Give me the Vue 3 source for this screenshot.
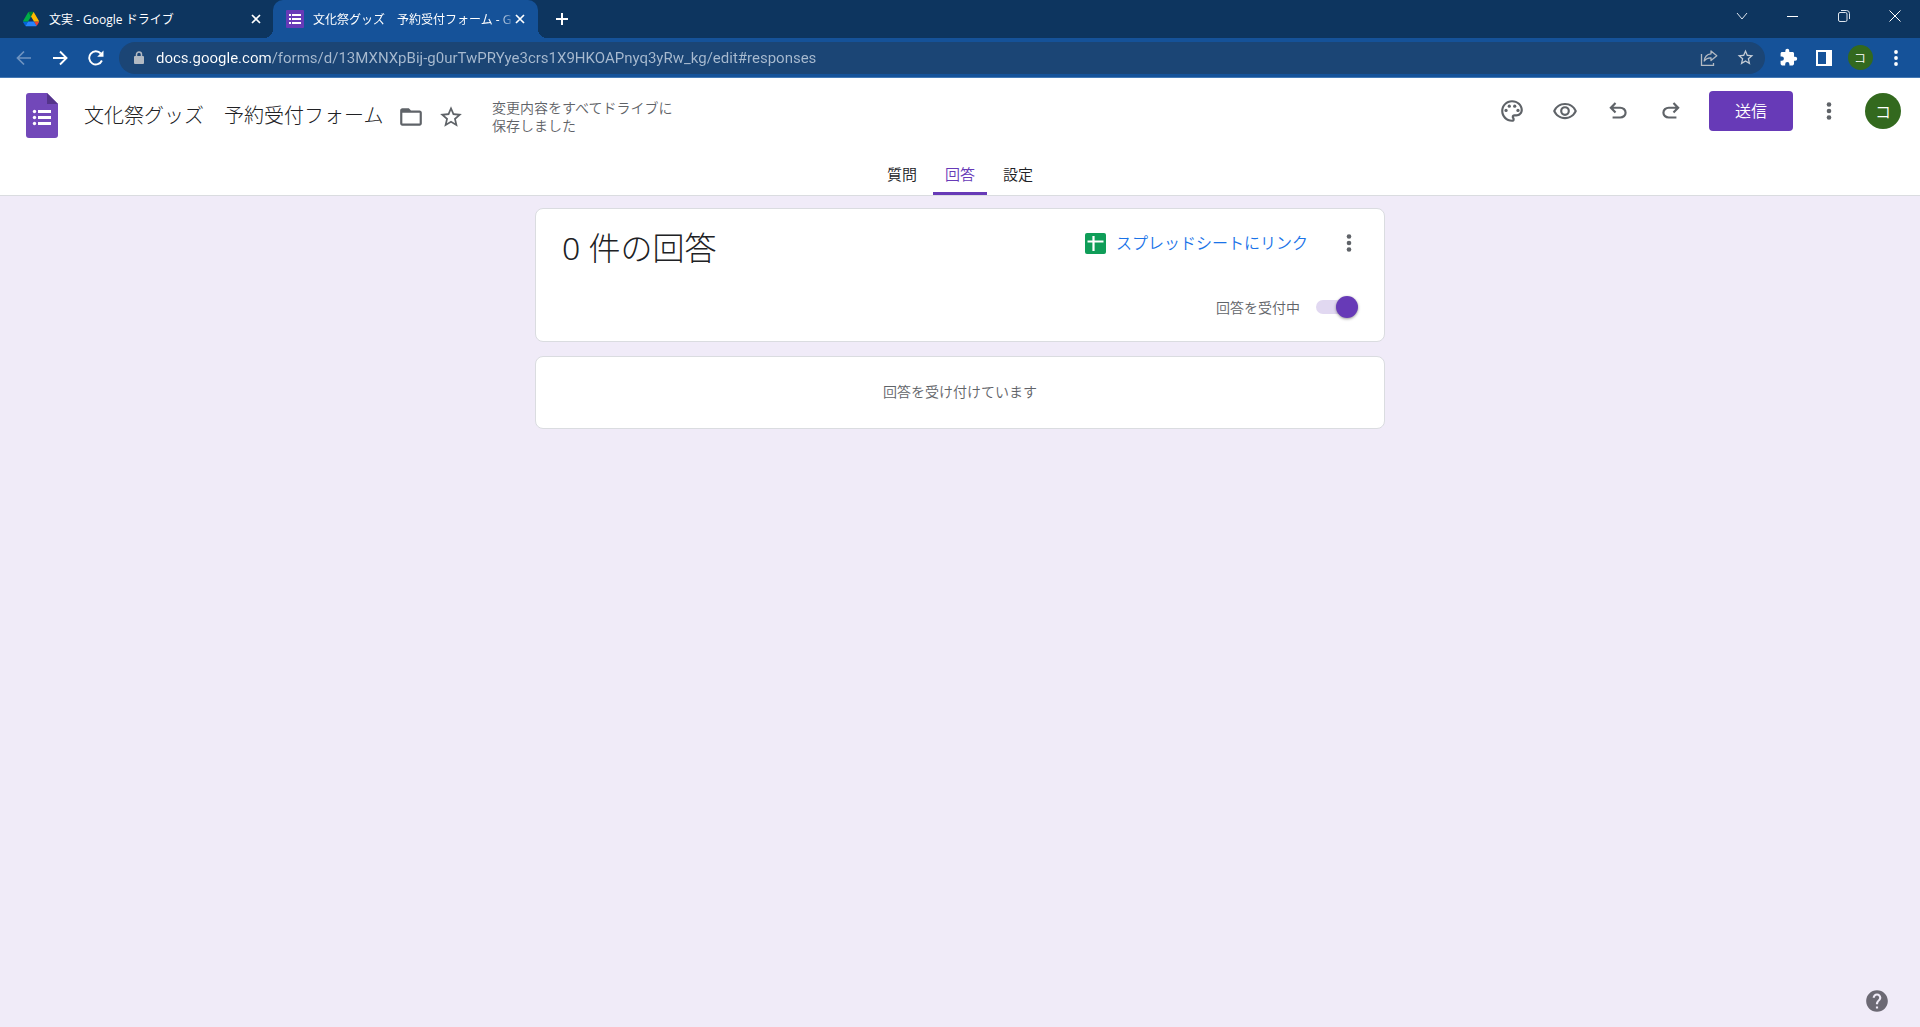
<script setup>
import { ref } from 'vue'

const url = ref('docs.google.com/forms/d/13MXNXpBij-g0urTwPRYye3crs1X9HKOAPnyq3yRw_kg/edit#responses')
const title = ref('文化祭グッズ　予約受付フォーム')
const accepting = ref(true)
const active = ref('回答')
const sections = ['質問', '回答', '設定']

const star = 'M22 9.24l-7.19-.62L12 2 9.19 8.63 2 9.24l5.46 4.73L5.82 21 12 17.27 18.18 21l-1.63-7.03L22 9.24zM12 15.4l-3.76 2.27 1-4.28-3.32-2.88 4.38-.38L12 6.1l1.71 4.04 4.38.38-3.32 2.88 1 4.28L12 15.4z'
</script>

<template>
  <div class="window">
    <div class="strip">
      <div class="tab">
        <svg width="16" height="16" viewBox="0 0 87 78">
          <path fill="#0066da" d="M6.6 66.85l3.85 6.65c.8 1.4 1.95 2.5 3.3 3.3L27.5 53H0c0 1.55.4 3.1 1.2 4.5z" />
          <path fill="#00ac47" d="M43.65 25L29.9 1.2c-1.35.8-2.5 1.9-3.3 3.3L1.2 48.5A9 9 0 0 0 0 53h27.5z" />
          <path fill="#ea4335" d="M73.55 76.8c1.35-.8 2.5-1.9 3.3-3.3l1.6-2.75L86.1 57.5c.8-1.4 1.2-2.95 1.2-4.5H59.8l5.85 11.5z" />
          <path fill="#00832d" d="M43.65 25L57.4 1.2C56.05.4 54.5 0 52.9 0H34.4c-1.6 0-3.15.45-4.5 1.2z" />
          <path fill="#2684fc" d="M59.8 53H27.5L13.75 76.8c1.35.8 2.9 1.2 4.5 1.2h50.8c1.6 0 3.15-.45 4.5-1.2z" />
          <path fill="#ffba00" d="M73.4 26.5L60.7 4.5c-.8-1.4-1.95-2.5-3.3-3.3L43.65 25 59.8 53h27.45c0-1.55-.4-3.1-1.2-4.5z" />
        </svg>
        <span class="tab-text">文実 - Google ドライブ</span>
        <button class="tab-close" aria-label="閉じる">
          <svg width="10" height="10" viewBox="0 0 10 10"><path d="M1 1l8 8M9 1l-8 8" stroke="#fff" stroke-width="1.7" /></svg>
        </button>
      </div>
      <div class="tab current">
        <svg width="18" height="18" viewBox="0 0 18 18">
          <rect width="18" height="18" rx="1" fill="#673ab7" />
          <path fill="#fff" d="M3 4h2v2H3zM6 4h9v2H6zM3 8h2v2H3zM6 8h9v2H6zM3 12h2v2H3zM6 12h9v2H6z" />
        </svg>
        <span class="tab-text">文化祭グッズ　予約受付フォーム - G</span>
        <button class="tab-close" aria-label="閉じる">
          <svg width="10" height="10" viewBox="0 0 10 10"><path d="M1 1l8 8M9 1l-8 8" stroke="#fff" stroke-width="1.7" /></svg>
        </button>
      </div>
      <button class="new-tab" aria-label="新しいタブ">
        <svg width="14" height="14" viewBox="0 0 14 14"><path d="M7 1v12M1 7h12" stroke="#fff" stroke-width="2" /></svg>
      </button>
      <div class="controls">
        <button aria-label="タブを検索"><svg width="12" height="8" viewBox="0 0 12 8"><path d="M1 1l5 6 5-6" fill="none" stroke="#dfe6ee" /></svg></button>
        <button aria-label="最小化"><svg width="12" height="12" viewBox="0 0 12 12"><path d="M0 6.5h11" stroke="#fff" /></svg></button>
        <button aria-label="元に戻す">
          <svg width="12" height="12" viewBox="0 0 12 12" fill="none" stroke="#dfe6ee">
            <rect x=".5" y="2.5" width="8.5" height="9" rx="1.5" /><path d="M3 .5h5.5a3 3 0 0 1 3 3V9" />
          </svg>
        </button>
        <button aria-label="閉じる"><svg width="12" height="12" viewBox="0 0 12 12"><path d="M.5.5l11 11M11.5.5l-11 11" stroke="#fff" /></svg></button>
      </div>
    </div>

    <div class="toolbar">
      <button aria-label="戻る"><svg width="16" height="16" viewBox="0 0 16 16" fill="none" stroke="#6f94c1" stroke-width="1.7"><path d="M15 8H2M8 1.5L1.5 8 8 14.5" /></svg></button>
      <button aria-label="進む"><svg width="16" height="16" viewBox="0 0 16 16" fill="none" stroke="#fff" stroke-width="1.9"><path d="M1 8h13M8 1.5L14.5 8 8 14.5" /></svg></button>
      <button aria-label="再読み込み">
        <svg width="16" height="16" viewBox="0 0 16 16"><path d="M13.9 10.5A6.6 6.6 0 1 1 12.8 3.5" fill="none" stroke="#fff" stroke-width="1.9" /><path d="M15.5.5v6.3H9.2z" fill="#fff" /></svg>
      </button>
      <div class="omnibox">
        <svg width="10" height="14" viewBox="0 0 10 14"><rect y="5" width="10" height="8" rx="1" fill="#b3bac3" /><path d="M2.5 6V3.5a2.5 2.5 0 0 1 5 0V6" fill="none" stroke="#b3bac3" stroke-width="1.5" /></svg>
        <input v-model="url" class="url" aria-label="アドレス" spellcheck="false">
        <button aria-label="共有">
          <svg width="18" height="18" viewBox="0 0 18 18" fill="none" stroke="#b3bac3" stroke-width="1.3">
            <path d="M1.5 5v11.3H13.5V14" /><path d="M11 2l5.8 4.8L11 11.5V8.8C8 8.6 5.8 9.7 4.2 12c.4-4 2.8-6.8 6.8-7.2z" stroke-linejoin="round" />
          </svg>
        </button>
        <button aria-label="ブックマーク"><svg width="19" height="19" viewBox="0 0 24 24" fill="#c4ccd6"><path :d="star" /></svg></button>
      </div>
      <button aria-label="拡張機能">
        <svg width="19" height="19" viewBox="0 0 24 24" fill="#fff"><path d="M20.5 11H19V7c0-1.1-.9-2-2-2h-4V3.5a2.5 2.5 0 0 0-5 0V5H4c-1.1 0-2 .9-2 2v3.8h1.5a2.7 2.7 0 0 1 0 5.4H2V20c0 1.1.9 2 2 2h3.8v-1.5a2.7 2.7 0 0 1 5.4 0V22H17c1.1 0 2-.9 2-2v-4h1.5a2.5 2.5 0 0 0 0-5z" /></svg>
      </button>
      <button aria-label="サイドパネル"><svg width="16" height="16" viewBox="0 0 16 16"><path fill="#fff" fill-rule="evenodd" d="M0 0h16v16H0zM2 2v12h8V2z" /></svg></button>
      <button aria-label="プロフィール"><span class="avatar small">コ</span></button>
      <button aria-label="メニュー"><svg width="4" height="16" viewBox="0 0 4 16" fill="#fff"><circle cx="2" cy="2" r="1.9" /><circle cx="2" cy="8" r="1.9" /><circle cx="2" cy="14" r="1.9" /></svg></button>
    </div>

    <header>
      <div class="top">
        <a class="logo" href="#" aria-label="フォーム ホーム">
          <svg width="32" height="45" viewBox="0 0 32 45">
            <path fill="#7248b9" d="M3 0h18l11 11v31a3 3 0 0 1-3 3H3a3 3 0 0 1-3-3V3a3 3 0 0 1 3-3z" />
            <path fill="#54348a" d="M21 0l11 11H21z" />
            <path fill="#fff" d="M12 17h13v3H12zM12 23h13v3H12zM12 29h13v3H12z" />
            <g fill="#fff"><circle cx="8.5" cy="18.5" r="1.7" /><circle cx="8.5" cy="24.5" r="1.7" /><circle cx="8.5" cy="30.5" r="1.7" /></g>
          </svg>
        </a>
        <input v-model="title" class="title" aria-label="フォームのタイトル">
        <div class="marks">
          <button class="icon" aria-label="移動"><svg viewBox="0 0 24 24"><path d="M20 6h-8l-2-2H4c-1.1 0-2 .9-2 2v12c0 1.1.9 2 2 2h16c1.1 0 2-.9 2-2V8c0-1.1-.9-2-2-2zm0 12H4V8h16v10z" /></svg></button>
          <button class="icon" aria-label="スター"><svg viewBox="0 0 24 24"><path :d="star" /></svg></button>
        </div>
        <p class="saved">変更内容をすべてドライブに<br>保存しました</p>
        <div class="actions">
          <button class="icon" aria-label="テーマをカスタマイズ">
            <svg viewBox="0 0 24 24"><path d="M12 22C6.49 22 2 17.51 2 12S6.49 2 12 2s10 4.04 10 9c0 3.31-2.69 6-6 6h-1.77c-.28 0-.5.22-.5.5 0 .12.05.23.13.33.41.47.64 1.06.64 1.67A2.5 2.5 0 0 1 12 22zm0-18c-4.41 0-8 3.59-8 8s3.59 8 8 8c.28 0 .5-.22.5-.5a.54.54 0 0 0-.14-.35c-.41-.46-.63-1.05-.63-1.65a2.5 2.5 0 0 1 2.5-2.5H16c2.21 0 4-1.79 4-4 0-3.86-3.59-7-8-7z" /><circle cx="6.5" cy="11.5" r="1.5" /><circle cx="9.5" cy="7.5" r="1.5" /><circle cx="14.5" cy="7.5" r="1.5" /><circle cx="17.5" cy="11.5" r="1.5" /></svg>
          </button>
          <button class="icon" aria-label="プレビュー">
            <svg viewBox="0 0 24 23"><path d="M12 6a9.77 9.77 0 0 1 8.82 5.5 9.77 9.77 0 0 1-17.64 0A9.77 9.77 0 0 1 12 6m0-2C7 4 2.73 7.11 1 11.5 2.73 15.89 7 19 12 19s9.27-3.11 11-7.5C21.27 7.11 17 4 12 4zm0 5a2.5 2.5 0 1 1 0 5 2.5 2.5 0 0 1 0-5m0-2a4.5 4.5 0 1 0 0 9 4.5 4.5 0 0 0 0-9z" /></svg>
          </button>
          <button class="icon" aria-label="元に戻す">
            <svg viewBox="0 0 24 24"><path d="M7 19v-2h7.1q1.575 0 2.738-1T18 13.5 16.838 11 14.1 10H7.8l2.6 2.6L9 14 4 9l5-5 1.4 1.4L7.8 8h6.3q2.425 0 4.163 1.575T20 13.5t-1.737 3.925T14.1 19H7z" /></svg>
          </button>
          <button class="icon" aria-label="やり直す">
            <svg viewBox="0 0 24 24"><path transform="matrix(-1 0 0 1 24 0)" d="M7 19v-2h7.1q1.575 0 2.738-1T18 13.5 16.838 11 14.1 10H7.8l2.6 2.6L9 14 4 9l5-5 1.4 1.4L7.8 8h6.3q2.425 0 4.163 1.575T20 13.5t-1.737 3.925T14.1 19H7z" /></svg>
          </button>
          <button class="send">送信</button>
          <button class="icon" aria-label="その他"><svg viewBox="0 0 26 26"><circle cx="13" cy="6.5" r="2.3" /><circle cx="13" cy="13" r="2.3" /><circle cx="13" cy="19.5" r="2.3" /></svg></button>
          <button aria-label="アカウント"><span class="avatar">コ</span></button>
        </div>
      </div>
      <nav>
        <button v-for="s in sections" :key="s" :class="{ on: s === active }" @click="active = s">{{ s }}</button>
      </nav>
    </header>

    <main>
      <section class="card summary">
        <h1>0 件の回答</h1>
        <div class="side">
          <div class="row">
            <a class="sheet" href="#">
              <svg width="21" height="21" viewBox="0 0 21 21"><rect width="21" height="21" rx="2" fill="#0f9d58" /><path d="M8.5 3v15M2.5 8.5h16" stroke="#fff" stroke-width="2.2" /></svg>
              <span>スプレッドシートにリンク</span>
            </a>
            <button class="more" aria-label="その他">
              <svg width="18" height="26" viewBox="0 0 18 26"><circle cx="9" cy="6.5" r="2.3" /><circle cx="9" cy="13" r="2.3" /><circle cx="9" cy="19.5" r="2.3" /></svg>
            </button>
          </div>
          <label class="row accept">回答を受付中<input v-model="accepting" type="checkbox" class="toggle"></label>
        </div>
      </section>
      <section class="card waiting">回答を受け付けています</section>
    </main>

    <button class="help" aria-label="ヘルプ">
      <svg width="26" height="26" viewBox="0 0 24 24"><path fill="#6c6974" d="M12 2C6.48 2 2 6.48 2 12s4.48 10 10 10 10-4.48 10-10S17.52 2 12 2zm1 17h-2v-2h2v2zm2.07-7.75l-.9.92C13.45 12.9 13 13.5 13 15h-2v-.5c0-1.1.45-2.1 1.17-2.83l1.24-1.26c.37-.36.59-.86.59-1.41 0-1.1-.9-2-2-2s-2 .9-2 2H8c0-2.21 1.79-4 4-4s4 1.79 4 4c0 .88-.36 1.68-.93 2.25z" /></svg>
    </button>
  </div>
</template>

<style>
body {
  background: #f0ebf8;
}
</style>

<style scoped>
.window {
  min-height: 100vh;
  font-family: "Noto Sans CJK JP", sans-serif;
  font-weight: 350;
  color: #202124;
}
button, input {
  font: inherit;
  color: inherit;
  border: 0;
  padding: 0;
  margin: 0;
  background: none;
}
button {
  display: flex;
  align-items: center;
  justify-content: center;
  flex-shrink: 0;
}
svg {
  display: block;
  flex-shrink: 0;
}
.strip {
  display: flex;
  height: 38px;
  background: #0d355f;
}
.tab {
  display: flex;
  align-items: center;
  box-sizing: border-box;
  width: 273px;
  padding: 0 7px 0 23px;
  gap: 10px;
  color: #fff;
  font-family: "Open Sans", "Noto Sans CJK JP", sans-serif;
  font-size: 12px;
  font-weight: 400;
}
.tab-text {
  flex: 1;
  white-space: nowrap;
}
.tab-close {
  width: 20px;
  height: 20px;
}
.current {
  position: relative;
  width: 265px;
  padding: 0 13px;
  gap: 9px;
  background: #155299;
  border-radius: 10px 10px 0 0;
}
.current .tab-close {
  width: 10px;
  margin-left: -9px;
}
.current .tab-text {
  mask-image: linear-gradient(to right, #000 92%, #0004 98%);
}
.current::before, .current::after {
  content: "";
  position: absolute;
  bottom: 0;
  width: 9px;
  height: 9px;
}
.current::before {
  right: 100%;
  background: radial-gradient(circle at 0 0, transparent 9px, #155299 9px);
}
.current::after {
  left: 100%;
  background: radial-gradient(circle at 100% 0, transparent 9px, #155299 9px);
}
.new-tab {
  width: 48px;
}
.controls {
  display: flex;
  margin-left: auto;
  height: 32px;
}
.controls button {
  width: 51px;
}
.toolbar {
  display: flex;
  align-items: center;
  box-sizing: border-box;
  height: 40px;
  padding: 0 6px;
  background: #155299;
  border-bottom: 1px solid #4479b5;
}
.toolbar button {
  width: 36px;
  height: 32px;
}
.omnibox {
  display: flex;
  flex: 1;
  align-items: center;
  height: 32px;
  margin: 0 5px;
  padding: 0 2px 0 15px;
  border-radius: 16px;
  background: #1b4575;
}
.url {
  flex: 1;
  min-width: 0;
  margin-left: 12px;
  height: 24px;
  font-family: Roboto, sans-serif;
  font-size: 15px;
  font-weight: 400;
  color: #a9bbd0;
  background: linear-gradient(to right, #fff 115px, #a9bbd0 115px);
  background-clip: text;
  -webkit-text-fill-color: transparent;
}
.avatar {
  display: flex;
  align-items: center;
  justify-content: center;
  width: 36px;
  height: 36px;
  border-radius: 50%;
  background: #33691e;
  color: #fff;
  font-size: 16px;
  line-height: 16px;
}
.small {
  width: 25px;
  height: 25px;
  font-size: 12px;
}
header {
  background: #fff;
  border-bottom: 1px solid #dadce0;
}
.top {
  display: flex;
  align-items: center;
  box-sizing: border-box;
  height: 76px;
  padding: 0 19px 2px 26px;
  gap: 14px;
}
.title {
  width: 300px;
  height: 32px;
  margin-left: 12px;
  padding-bottom: 2px;
  font-size: 20px;
  font-weight: 300;
}
.marks {
  display: flex;
  gap: 14px;
  padding-top: 4px;
}
.icon svg {
  width: 26px;
  height: 26px;
  fill: #5f6368;
}
.saved {
  margin: 0 0 0 14px;
  padding-top: 2px;
  font-size: 14px;
  line-height: 18px;
  color: #5f6368;
}
.actions {
  display: flex;
  align-items: center;
  align-self: flex-start;
  gap: 27px;
  height: 66px;
  margin-left: auto;
}
.send {
  box-sizing: border-box;
  width: 84px;
  height: 40px;
  margin-left: -2px;
  padding-bottom: 2px;
  border-radius: 4px;
  background: #673ab7;
  color: #fff;
  font-size: 16px;
}
.send ~ button {
  margin-left: -4px;
}
nav {
  display: flex;
  justify-content: center;
  gap: 4px;
}
nav button {
  box-sizing: border-box;
  width: 54px;
  height: 41px;
  border-bottom: 3px solid transparent;
  border-radius: 2px 2px 0 0;
  font-size: 15px;
}
nav .on {
  color: #673ab7;
  border-bottom-color: #673ab7;
}
main {
  display: flex;
  flex-direction: column;
  align-items: center;
  gap: 14px;
  padding: 12px 20px;
}
.card {
  box-sizing: border-box;
  width: 100%;
  max-width: 850px;
  border: 1px solid #dadce0;
  border-radius: 8px;
  background: #fff;
}
.summary {
  display: flex;
  justify-content: space-between;
  padding: 16px 26px;
}
h1 {
  margin: 0;
  font-family: "Noto Sans", "Noto Sans CJK JP", sans-serif;
  font-size: 32px;
  line-height: 46px;
  font-weight: 300;
}
.side {
  display: flex;
  flex-direction: column;
  gap: 28px;
}
.row {
  display: flex;
  align-items: center;
  justify-content: flex-end;
  height: 36px;
}
.sheet {
  display: flex;
  align-items: center;
  gap: 10px;
  font-size: 16px;
  line-height: 24px;
  color: #1a73e8;
  text-decoration: none;
}
.sheet span {
  padding-bottom: 2px;
}
.more {
  margin-left: 32px;
  fill: #5f6368;
}
.accept {
  gap: 16px;
  font-size: 14px;
  color: #5f6368;
}
.toggle {
  appearance: none;
  position: relative;
  width: 42px;
  height: 22px;
}
.toggle::before {
  content: "";
  position: absolute;
  left: 0;
  top: 4px;
  width: 36px;
  height: 14px;
  border-radius: 7px;
  background: #e1d8f1;
}
.toggle::after {
  content: "";
  position: absolute;
  left: 0;
  top: 0;
  width: 22px;
  height: 22px;
  border-radius: 50%;
  background: #fafafa;
  box-shadow: 0 1px 3px #0006;
}
.toggle:checked::after {
  left: 20px;
  background: #673ab7;
}
.waiting {
  padding: 24px 25px 26px;
  font-size: 14px;
  line-height: 21px;
  text-align: center;
  color: #5f6368;
}
.help {
  position: fixed;
  right: 30px;
  bottom: 13px;
}
</style>
